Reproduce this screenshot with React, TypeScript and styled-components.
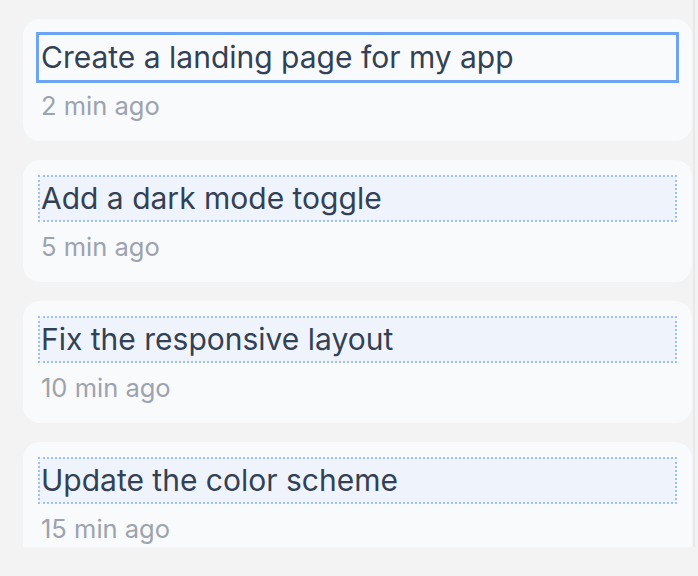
import { createGlobalStyle, styled } from "styled-components";

interface IPrompt {
    title: string;
    time: string;
}

const prompts: IPrompt[] = [
    { title: "Create a landing page for my app", time: "2 min ago" },
    { title: "Add a dark mode toggle", time: "5 min ago" },
    { title: "Fix the responsive layout", time: "10 min ago" },
    { title: "Update the color scheme", time: "15 min ago" },
];

const GlobalStyle = createGlobalStyle`
    html, body {
        margin: 0;
        padding: 0;
        background-color: #f3f3f3;
        font-family: Inter, "Noto Sans", sans-serif;
    }
`;

const List = styled.div`
    box-sizing: border-box;
    width: 695px;
    height: 547px;
    overflow: hidden;
    padding: 19px 1px 0 23px;
    border-right: 2px solid #e8e8e8;
    display: flex;
    flex-direction: column;
    gap: 19px;
`;

const Card = styled.div`
    flex-shrink: 0;
    background-color: #f9fafb;
    border-radius: 17px;
    padding: 16px;
    display: flex;
    flex-direction: column;
    gap: 6px;
`;

const Title = styled.div<{ $focused?: boolean }>`
    font-size: 30px;
    line-height: 41px;
    padding: 2px 2px;
    color: #334155;
    background-color: ${({ $focused }) => ($focused ? "transparent" : "#eff4fc")};
    outline: ${({ $focused }) => ($focused ? "3px solid #6ea4f6" : "2px dotted #9dc1f7")};
    outline-offset: ${({ $focused }) => ($focused ? "0" : "-1px")};
`;

const Time = styled.div`
    font-size: 25.5px;
    line-height: 39px;
    color: #9ca3af;
    padding-left: 2px;
`;

function App() {
    return (
        <>
            <GlobalStyle />
            <List>
                {prompts.map((prompt, index) => (
                    <Card key={index}>
                        <Title $focused={index === 0}>{prompt.title}</Title>
                        <Time>{prompt.time}</Time>
                    </Card>
                ))}
            </List>
        </>
    );
}

export default App;
